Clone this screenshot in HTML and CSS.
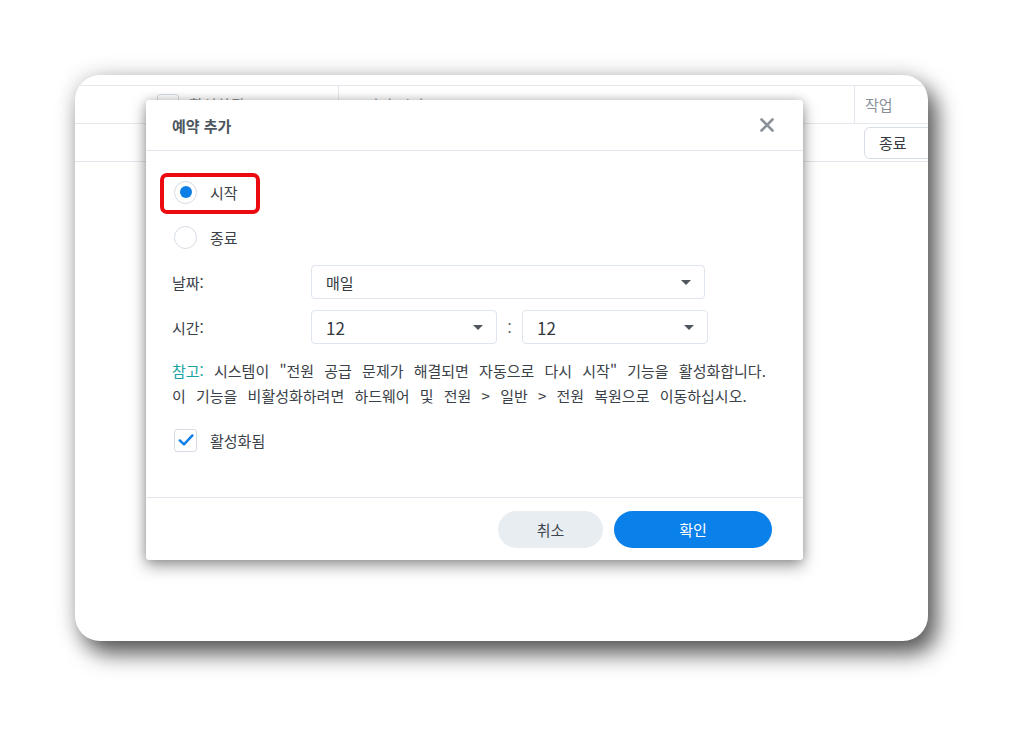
FILE: index.html
```html
<!DOCTYPE html>
<html lang="ko">
<head>
<meta charset="utf-8">
<link rel="stylesheet" href="styles.css">
</head>
<body>
<div class="stage">
  <div class="card">
    <div class="table">
      <div class="trow thead">
        <div class="cell c1"><span class="cb small"></span><span class="muted">활성화됨</span></div>
        <div class="cell c2"><span class="muted">트리거 시간</span></div>
        <div class="cell c3"><span class="muted">작업</span></div>
      </div>
      <div class="trow tbody">
        <div class="cell c1"></div>
        <div class="cell c2"></div>
        <div class="cell c3"><span class="btn-out">종료</span></div>
      </div>
    </div>

    <div class="dialog">
      <div class="dlg-head">
        <span class="dlg-title">예약 추가</span>
        <svg class="close" width="14" height="14" viewBox="0 0 14 14"><path d="M1.5 1.5 L12.5 12.5 M12.5 1.5 L1.5 12.5" stroke="#8b9199" stroke-width="2.6" stroke-linecap="round"/></svg>
      </div>
      <div class="dlg-body">
        <div class="row radio-row">
          <span class="radio on"><span class="dot"></span></span><span class="lbl">시작</span>
          <span class="mark"></span>
        </div>
        <div class="row radio-row">
          <span class="radio"></span><span class="lbl">종료</span>
        </div>
        <div class="row form-row">
          <span class="flabel">날짜:</span>
          <div class="select wide"><span>매일</span><span class="caret"></span></div>
        </div>
        <div class="row form-row">
          <span class="flabel">시간:</span>
          <div class="select half"><span class="num">12</span><span class="caret"></span></div>
          <span class="colon">:</span>
          <div class="select half"><span class="num">12</span><span class="caret"></span></div>
        </div>
        <p class="note"><span class="teal">참고:</span> 시스템이 "전원 공급 문제가 해결되면 자동으로 다시 시작" 기능을 활성화합니다.<br>이 기능을 비활성화하려면 하드웨어 및 전원 &gt; 일반 &gt; 전원 복원으로 이동하십시오.</p>
        <div class="row check-row">
          <span class="cb">
            <svg width="16" height="14" viewBox="0 0 16 14"><path d="M1.8 7.4 L6 11.4 L14.4 2.4" fill="none" stroke="#0b7fe6" stroke-width="2.4" stroke-linecap="round" stroke-linejoin="round"/></svg>
          </span>
          <span class="lbl">활성화됨</span>
        </div>
      </div>
      <div class="dlg-foot">
        <span class="btn cancel">취소</span>
        <span class="btn ok">확인</span>
      </div>
    </div>
  </div>
</div>
</body>
</html>
```

FILE: styles.css
```css
* { box-sizing: border-box; }
html, body {
  margin: 0;
  width: 1024px;
  height: 737px;
  background: #ffffff;
  overflow: hidden;
  font-family: "Noto Sans CJK KR", "Noto Sans", sans-serif;
  color: #3a4148;
}
.stage {
  padding: 75px 0 0 75px;
}
.card {
  position: relative;
  width: 853px;
  height: 566px;
  background: #ffffff;
  border-radius: 25px;
  overflow: hidden;
  box-shadow: 0 0 22px rgba(0,0,0,0.18), 9px 13px 22px rgba(0,0,0,0.62);
  padding-top: 10px;
}
.table {
  display: flex;
  flex-direction: column;
}
.trow {
  display: flex;
  border-bottom: 1px solid #e3e8ee;
}
.thead {
  height: 39px;
  border-top: 1px solid #e3e8ee;
}
.tbody { height: 38px; }
.cell {
  display: flex;
  align-items: center;
  font-size: 15px;
  flex: none;
  min-width: 0;
}
.c1 { width: 263px; padding-left: 82px; gap: 10px; }
.c2 { width: 516px; padding-left: 12px; }
.thead .c2, .thead .c3 { border-left: 1px solid #e3e8ee; }
.c3 { width: 74px; padding-left: 10px; overflow: visible; }
.tbody .c3 { padding-left: 10px; }
.muted { color: #8a9098; }
.btn-out {
  display: inline-flex;
  align-items: center;
  flex: none;
  height: 32px;
  padding: 0 14px;
  border: 1px solid #d8dee5;
  border-radius: 6px;
  color: #343a40;
  font-size: 15px;
  width: 90px;
}

.dialog {
  position: absolute;
  left: 71px;
  top: 25px;
  width: 657px;
  height: 460px;
  background: #ffffff;
  border-radius: 3px;
  box-shadow: 0 0 10px rgba(0,0,0,0.18), 0 6px 16px rgba(0,0,0,0.38);
  display: flex;
  flex-direction: column;
}
.dlg-head {
  height: 51px;
  flex: none;
  display: flex;
  align-items: center;
  justify-content: space-between;
  padding: 0 29px 0 26px;
  border-bottom: 1px solid #e3e8ee;
}
.dlg-title {
  font-size: 15px;
  font-weight: 700;
  color: #4d565f;
}
.dlg-body {
  flex: 1;
  padding: 24px 26px 0 26px;
  display: flex;
  flex-direction: column;
  gap: 11px;
}
.row {
  height: 34px;
  display: flex;
  align-items: center;
  position: relative;
  font-size: 15px;
}
.radio-row { padding-left: 2px; }
.radio {
  width: 23px;
  height: 23px;
  border-radius: 50%;
  border: 1px solid #d5dce4;
  display: inline-flex;
  align-items: center;
  justify-content: center;
  margin-right: 13px;
  background: #fff;
}
.radio .dot {
  width: 12px;
  height: 12px;
  border-radius: 50%;
  background: #0b7fe6;
}
.lbl { color: #3a4148; }
.mark {
  position: absolute;
  left: -12px;
  top: -2px;
  width: 100px;
  height: 41px;
  border: 4px solid #ea0a10;
  border-radius: 7px;
}
.flabel {
  width: 139px;
  flex: none;
}
.select {
  height: 34px;
  border: 1px solid #dfe5ec;
  border-radius: 4px;
  display: flex;
  align-items: center;
  justify-content: space-between;
  padding: 0 13px 0 14px;
  color: #343a40;
}
.num { font-size: 17px; }
.wide { width: 394px; }
.half { width: 186px; }
.colon {
  width: 25px;
  text-align: center;
  color: #5a6168;
}
.caret {
  width: 0;
  height: 0;
  border-left: 5px solid transparent;
  border-right: 5px solid transparent;
  border-top: 5px solid #4f565d;
}
.note {
  margin: 3px 0 4px 0;
  font-size: 15px;
  line-height: 25px;
  color: #3a4148;
  word-spacing: 6px;
}
.teal { color: #19a3a3; }
.check-row { padding-left: 2px; }
.cb {
  width: 23px;
  height: 23px;
  border: 1px solid #d5dce4;
  border-radius: 3px;
  display: inline-flex;
  align-items: center;
  justify-content: center;
  margin-right: 13px;
  background: #fff;
}
.cb.small { width: 22px; height: 22px; margin-right: 0; }
.dlg-foot {
  height: 63px;
  flex: none;
  border-top: 1px solid #e3e8ee;
  display: flex;
  align-items: center;
  justify-content: flex-end;
  gap: 11px;
  padding-right: 31px;
}
.btn {
  height: 37px;
  border-radius: 19px;
  display: inline-flex;
  align-items: center;
  justify-content: center;
  font-size: 15px;
}
.cancel {
  width: 105px;
  background: #e8edf2;
  color: #3f464d;
}
.ok {
  width: 158px;
  background: #0a80ea;
  color: #ffffff;
}
```
